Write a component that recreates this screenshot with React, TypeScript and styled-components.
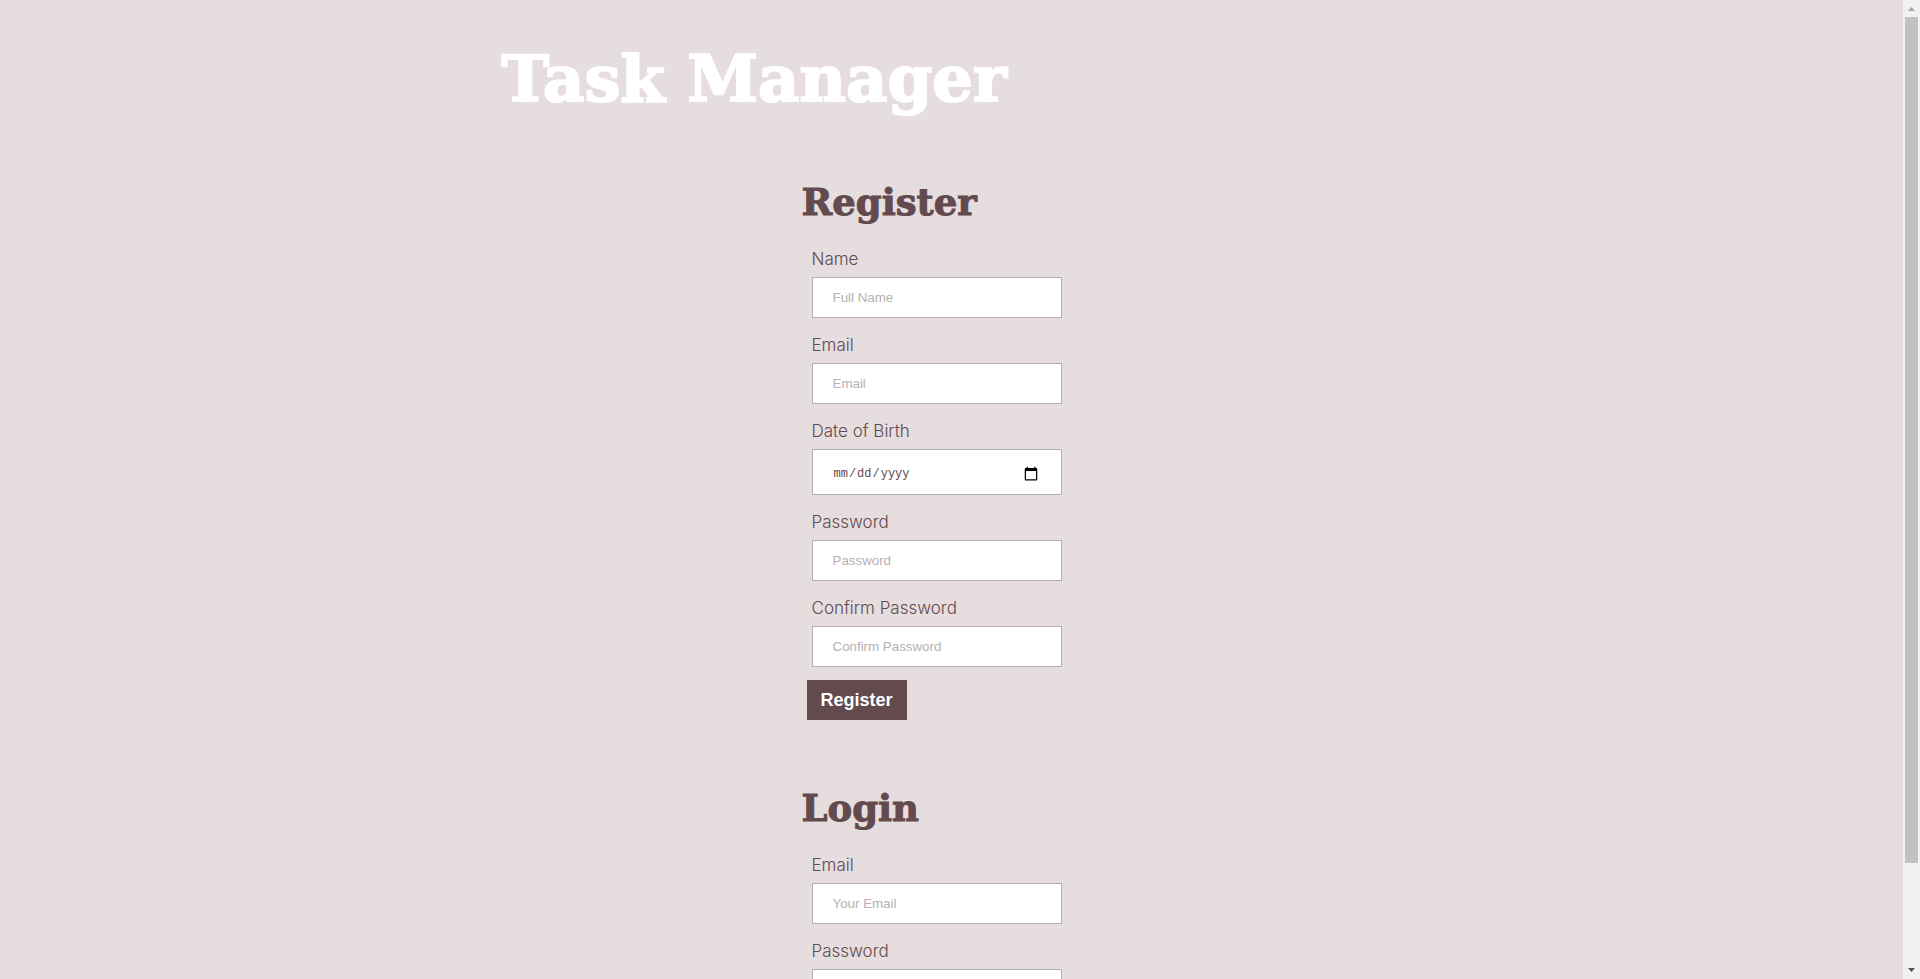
import React from "react";
import styled, { createGlobalStyle } from "styled-components";

const GlobalStyle = createGlobalStyle`
  * { box-sizing: border-box; }
  body { margin: 0; background: #e6dddf; }
`;

const Shell = styled.div`
  display: flex;
  height: 100vh;
  overflow: hidden;
  background: #e6dddf;
  color: #634a4e;
  font-family: Inter, "Liberation Sans", sans-serif;
`;

const Page = styled.main`
  flex: 1;
  min-width: 0;
  overflow-y: auto;
  scrollbar-width: none;
`;

const Container = styled.div`
  max-width: 900px;
  margin: 0 auto;
  padding: 34px 0 40px;
`;

const Title = styled.h1`
  margin: 0 0 50px;
  color: #fff;
  font: bold 64px/90px "DejaVu Serif", serif;
  -webkit-text-stroke: 2px #fff;
  white-space: nowrap;
`;

const FormSection = styled.form`
  width: 300px;
  margin: 0 auto 60px;
`;

const Heading = styled.h2`
  margin: 0 0 19px;
  font: bold 37px/56px "DejaVu Serif", serif;
  -webkit-text-stroke: 1px #634a4e;
`;

const Field = styled.div`
  display: flex;
  flex-direction: column;
  margin: 0 0 17px 10px;
  width: 250px;
`;

const Label = styled.label`
  margin-bottom: 8px;
  font-size: 17px;
  line-height: 20px;
  font-weight: 300;
`;

const Input = styled.input`
  width: 100%;
  height: 41px;
  padding: 12px 20px;
  border: 1px solid #b5adaf;
  border-radius: 0;
  background: #fff;
  color: #634a4e;
  font-family: "Liberation Sans", sans-serif;

  &::placeholder { color: #b9b0b1; }

  &[type="date"] {
    height: 46px;
    padding: 14px 20px 10px;
    font-family: "Liberation Mono", monospace;
    font-size: 12px;
  }

  &::-webkit-calendar-picker-indicator {
    font-size: 16px;
  }
`;

const Submit = styled.button`
  display: block;
  width: 100px;
  height: 40px;
  margin: -4px 0 0 5px;
  padding: 0;
  border: 0;
  background: #634a4e;
  color: #fff;
  font: bold 18px/20px "Liberation Sans", sans-serif;
`;

const Scrollbar = styled.div`
  display: flex;
  flex-direction: column;
  flex: 0 0 17px;
  background: #f1f1f1;
`;

const Arrow = styled.svg`
  width: 17px;
  height: 17px;
  flex: none;
`;

const Track = styled.div`
  flex: 1;
  padding: 0 2px;
`;

const Thumb = styled.div`
  height: 89.5%;
  background: #c1c1c1;
`;

type FieldSpec = { id: string; label: string; type: string; placeholder?: string };

const registerFields: FieldSpec[] = [
  { id: "name", label: "Name", type: "text", placeholder: "Full Name" },
  { id: "email", label: "Email", type: "email", placeholder: "Email" },
  { id: "birth", label: "Date of Birth", type: "date" },
  { id: "password", label: "Password", type: "password", placeholder: "Password" },
  { id: "confirm", label: "Confirm Password", type: "password", placeholder: "Confirm Password" },
];

const loginFields: FieldSpec[] = [
  { id: "login-email", label: "Email", type: "email", placeholder: "Your Email" },
  { id: "login-password", label: "Password", type: "password", placeholder: "Password" },
];

function AccountForm({ title, fields }: { title: string; fields: FieldSpec[] }) {
  return (
    <FormSection onSubmit={(e) => e.preventDefault()}>
      <Heading>{title}</Heading>
      {fields.map((f) => (
        <Field key={f.id}>
          <Label htmlFor={f.id}>{f.label}</Label>
          <Input id={f.id} type={f.type} placeholder={f.placeholder} />
        </Field>
      ))}
      <Submit type="submit">{title}</Submit>
    </FormSection>
  );
}

export default function App() {
  return (
    <>
      <GlobalStyle />
      <Shell>
        <Page>
          <Container>
            <Title>Task Manager</Title>
            <AccountForm title="Register" fields={registerFields} />
            <AccountForm title="Login" fields={loginFields} />
          </Container>
        </Page>
        <Scrollbar aria-hidden="true">
          <Arrow viewBox="0 0 17 17"><path d="M5 11h7L8.5 7z" fill="#a3a3a3" /></Arrow>
          <Track><Thumb /></Track>
          <Arrow viewBox="0 0 17 17"><path d="M5 6h7L8.5 10z" fill="#505050" /></Arrow>
        </Scrollbar>
      </Shell>
    </>
  );
}
